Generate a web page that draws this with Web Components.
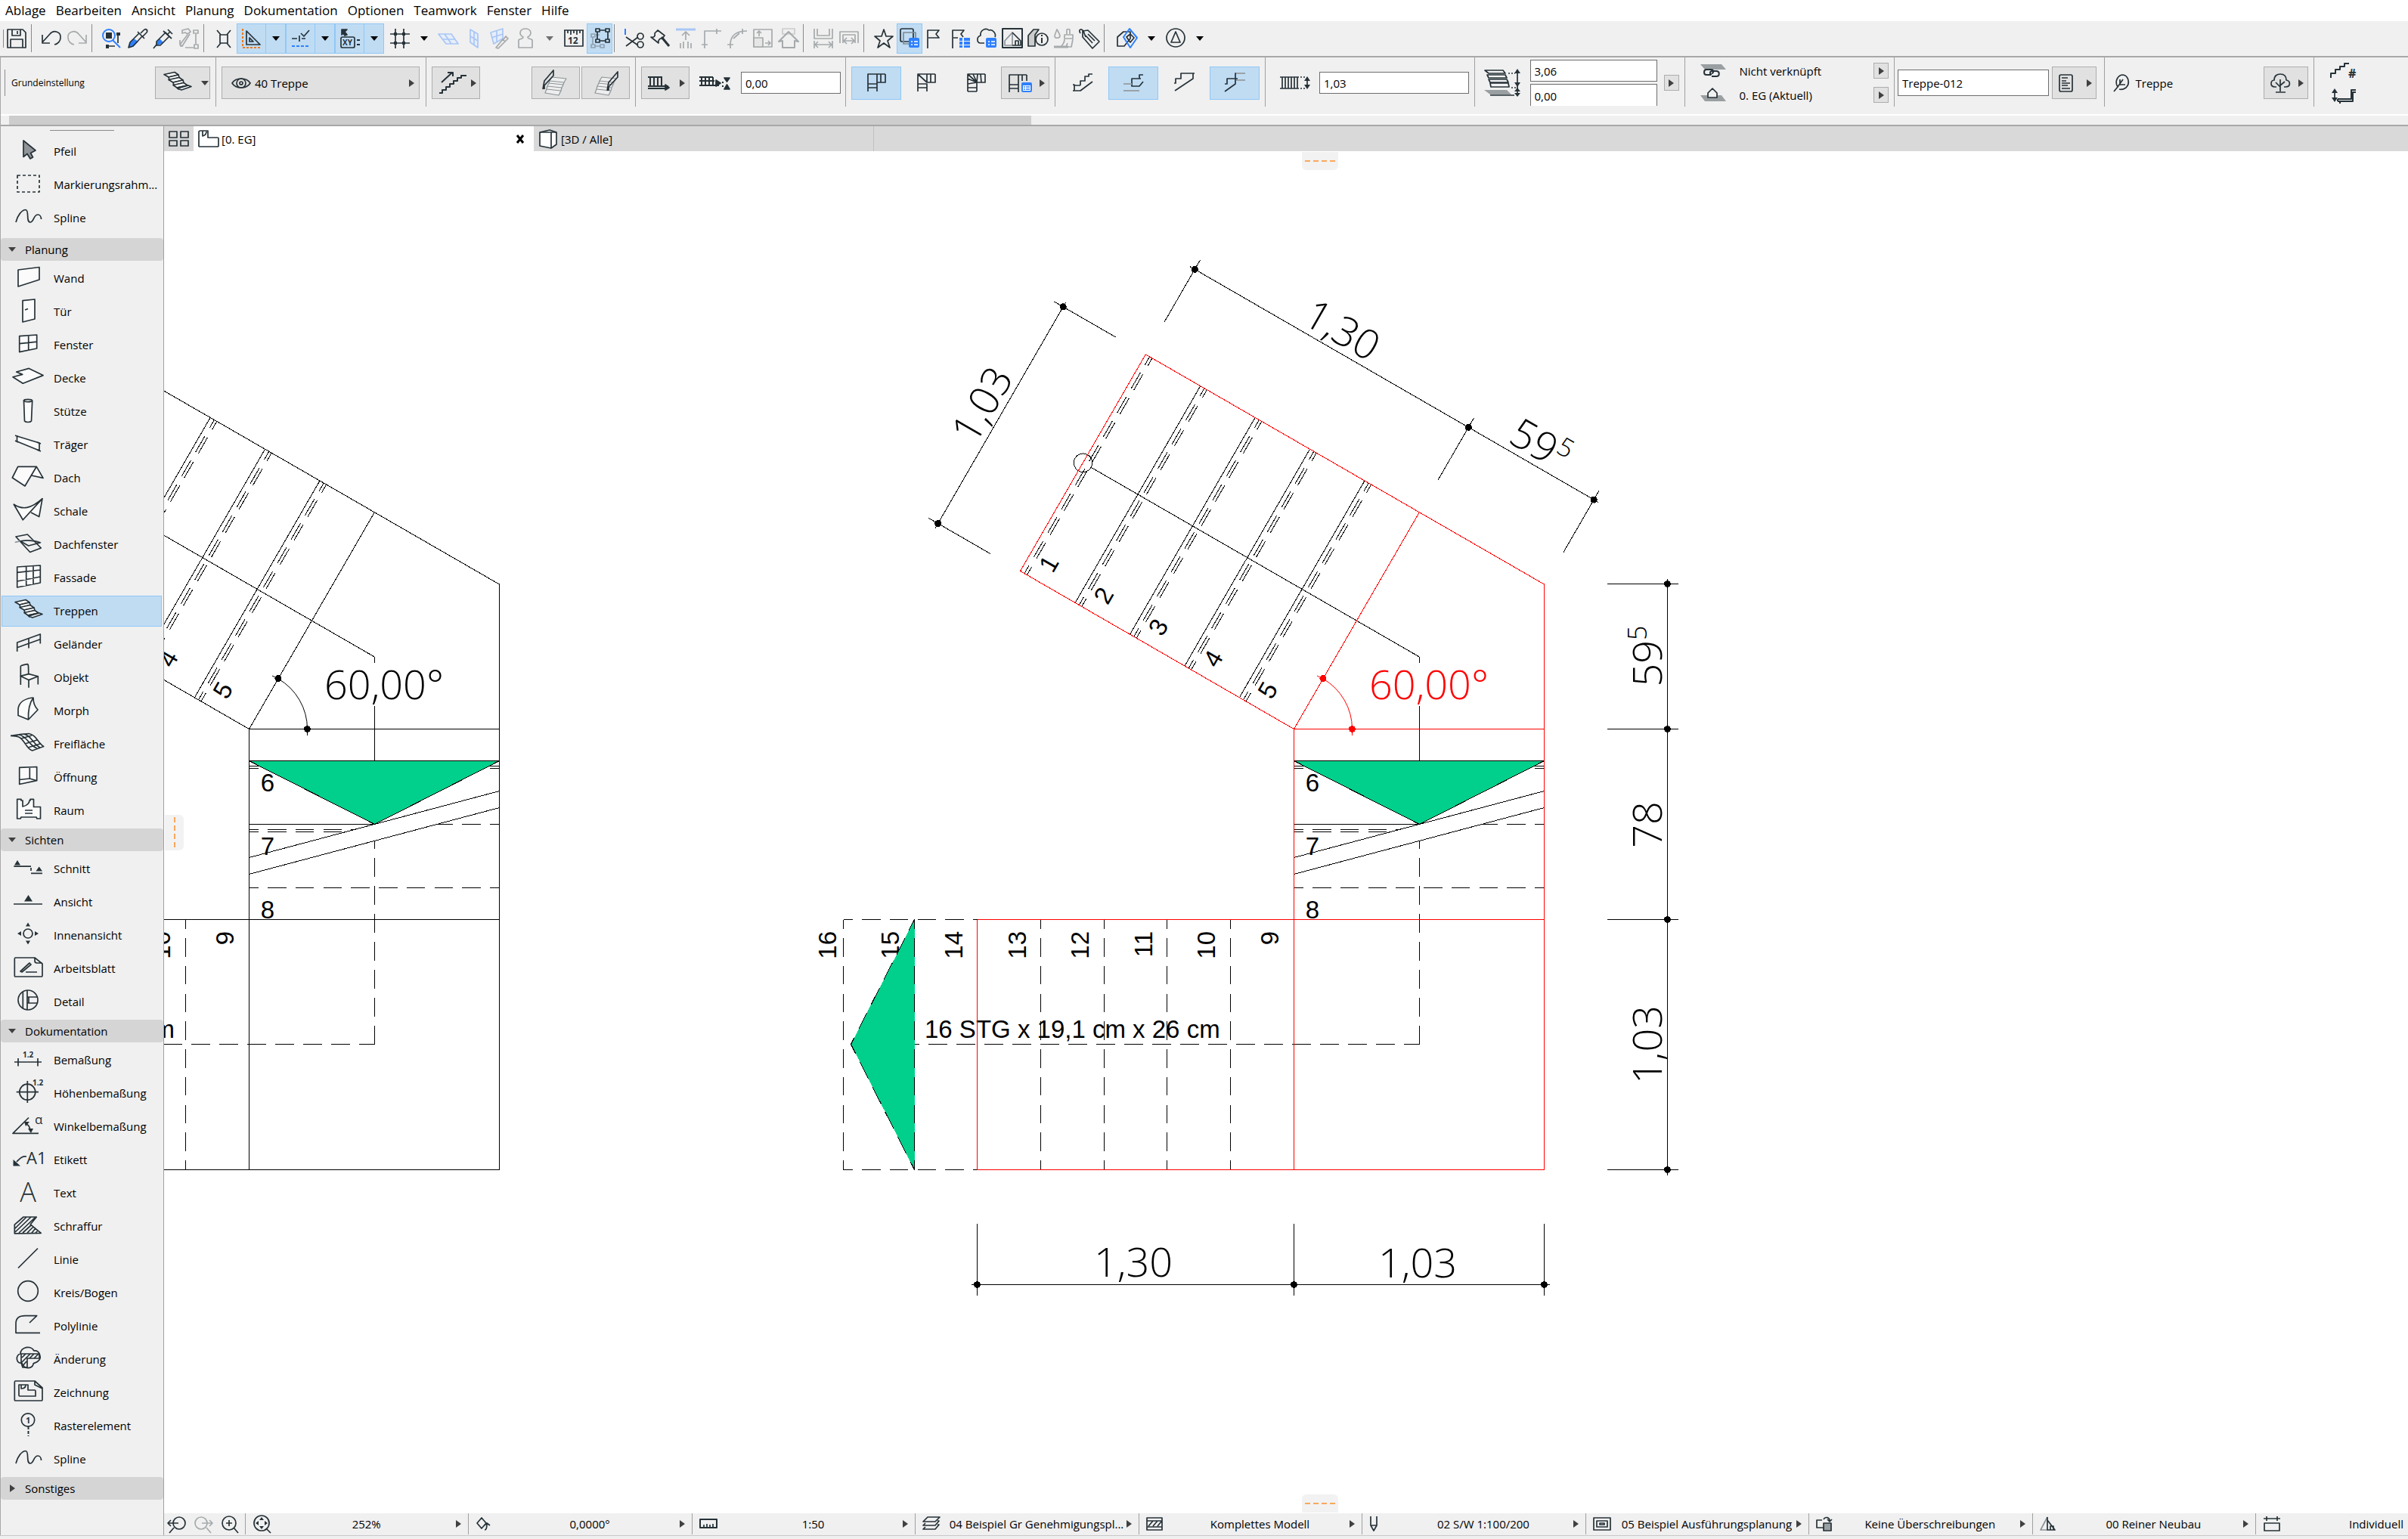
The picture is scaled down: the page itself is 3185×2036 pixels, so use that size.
<!DOCTYPE html>
<html lang="de">
<head>
<meta charset="utf-8">
<title>Grundriss – 0. EG</title>
<style>
html,body{height:100%;margin:0}
body{font-family:"Open Sans","Noto Sans",sans-serif;font-size:15px;color:#000;background:#f0f0f0;overflow:hidden}
</style>
</head>
<body>
<cad-app></cad-app>
<script>
/* ---------- icon library: [width, height, svg content] ---------- */
const I={
/* standard toolbar */
save:[28,28,'<path d="M2 2H22L26 6V26H2ZM8 2V10H19V2M6 26V15H22V26M15 4V8"/>'],
undo:[28,28,'<path d="M2 9V20H12M2 19L12 8C17 2 27 5 26 13C26 17 23 21 18 22"/>'],
redo:[28,28,'<path stroke="#a6aaac" d="M26 9V20H16M26 19L16 8C11 2 1 5 2 13C2 17 5 21 10 22"/>'],
find:[28,28,'<g stroke="#2f80ff" stroke-width="2"><circle cx="10" cy="10" r="8"/><path d="M15 16L25 26"/></g><path d="M22 8V20M8 24H18"/><path fill="#263238" stroke="none" d="M6 6H14V14H6ZM20 6H25V10H20ZM6 22H10V27H6Z"/>'],
pipette:[28,28,'<path fill="#2f80ff" stroke="none" d="M2 26L4 19L9 14L15 18L8 25Z"/><path d="M2 26L4 19L16 7L20 11L8 24ZM14 5L23 14M18 7L22 3C25 0 28 3 26 6L21 11"/>'],
syringe:[28,28,'<path fill="#2f80ff" stroke="none" d="M4 24L6 18L9 14L14 19L9 22Z"/><path d="M1 27L5 22M5 23V18L17 6L22 11L10 23ZM14 4L25 14M19 9L23 5M20 2L26 8"/>'],
hammer:[28,28,'<g stroke="#a6aaac"><path d="M5 3L13 1L16 5L12 8L9 6L5 7ZM12 9L2 22L5 24L15 8M20 3H26V7H20ZM23 8V21M2 24H6M9 26H20M21 22H26V27H21ZM2 16V22"/></g>'],
burst:[28,28,'<path d="M9 9H19V20H9ZM5 3L10 9M23 3L18 9M5 26L10 20M23 26L18 20"/>'],
setsq:[28,28,'<path d="M7 4V22H25ZM11 13V18H16Z" /><path stroke="#ee7a20" stroke-width="2" stroke-dasharray="3 2" d="M2 1V26H27"/>'],
snap:[28,28,'<path d="M2 14H9M12 10V18M15 14H20M14 7L18 11L25 3"/><path stroke="#2f80ff" stroke-width="2" stroke-dasharray="4 2" d="M2 24H26"/>'],
coord:[28,28,'<path fill="#263238" d="M3 2H10L7 5L10 9L7 10L5 7L3 9Z"/><rect x="2" y="12" width="18" height="14" rx="2"/><text x="4" y="23" font-size="10" font-weight="700">XY</text><path stroke-width="2" d="M23 16H27M23 22H27"/>'],
grid:[28,28,'<path d="M8 1V6M8 10V18M8 22V27M19 1V6M19 10V18M19 22V27M1 8H6M10 8H17M21 8H27M1 20H6M10 20H17M21 20H27"/><path fill="#263238" stroke="none" d="M6 6H10V10H6ZM17 6H21V10H17ZM6 18H10V22H6ZM17 18H21V22H17Z"/>'],
plane1:[28,28,'<g stroke="#a9c6f5"><path fill="#e6eefb" d="M1 8H18L27 21H11ZM6 15H23M9 8L18 21"/></g>'],
plane2:[28,28,'<g stroke="#a9c6f5"><path fill="#e6eefb" d="M9 2L19 8V26L9 19ZM14 5V22M9 11L19 17"/></g>'],
plane3:[28,28,'<g stroke="#a9c6f5"><path fill="#e6eefb" d="M2 6L18 1V14L6 21ZM10 4V18M3 13L18 8"/></g><path stroke="#a6aaac" fill="#eee" d="M9 26L18 15L21 18L12 27ZM19 15L22 11L25 14L21 18"/>'],
figure:[28,28,'<path stroke="#a6aaac" d="M11 12C4 8 7 1 14 1C21 1 24 8 17 12C17 15 22 14 23 16V26H5V16C6 14 11 15 11 12Z"/>'],
ruler:[28,28,'<path d="M1 3H27M2 3V24H26V3M6 3V7M10 3V9M14 3V7M18 3V9M22 3V7"/><text x="6" y="21" font-size="12" font-weight="700">12</text>'],
groupi:[28,28,'<g stroke="#8fa3b3"><path d="M3 8H8V12H3ZM3 22H8V26H3ZM15 22H20V26H15ZM5 12V22M8 24H15M9 9H14"/></g><path d="M9 1H14V5H9ZM22 1H27V5H22ZM9 15H14V19H9ZM22 15H27V19H22ZM14 3H22M11 5V15M25 5V15M14 17H22"/>'],
scissors:[28,28,'<path stroke="#2f80ff" stroke-width="2" d="M2 1V9"/><path d="M3 12L19 23M3 24L19 12"/><circle cx="22" cy="11" r="4"/><circle cx="22" cy="22" r="4"/>'],
axe:[28,28,'<path d="M2 12C6 13 8 11 7 7L11 3L20 10L17 14C14 13 11 16 12 20Z"/><path stroke-width="3" d="M16 12L26 24"/>'],
lift:[28,28,'<path stroke="#a9c6f5" stroke-width="3" d="M1 2H27"/><path stroke="#a6aaac" d="M14 16V5M9 10L14 5L19 10M7 20V27M11 18V27M17 18V27M21 20V27"/>'],
corner:[28,28,'<path stroke="#a6aaac" d="M5 27V4H27M1 22H9M21 1V8"/>'],
arci:[28,28,'<path stroke="#a6aaac" d="M5 27V20C6 10 13 4 27 4M1 22H9M21 1V8M9 14L17 7"/>'],
stretch:[28,28,'<g stroke="#a6aaac"><path d="M2 2H26V25H2Z"/><path fill="#e6e6e6" d="M2 13H14V25H2Z"/><path d="M9 11V4M6 7L9 4L12 7M17 20H24M21 17L24 20L21 23"/></g>'],
houseg:[28,28,'<g stroke="#a6aaac"><path stroke="#ccc" d="M6 1H22V8H6Z"/><path stroke-width="2" d="M1 18L14 5L27 18L22 17V26H6V17Z"/></g>'],
wallw:[28,28,'<g stroke="#a6aaac"><path d="M2 1V14H26V1M6 1V10H22V1M2 17V27M26 17V27M3 22H25M7 18L3 22L7 26M21 18L25 22L21 26"/></g>'],
wallo:[28,28,'<g stroke="#a6aaac"><path d="M2 20V5H26V20M6 20V9H22V20M7 17H21M11 13L7 17L11 21M17 13L21 17L17 21"/></g>'],
star:[28,28,'<path d="M14 2L17 11H26L19 17L22 26L14 20L6 26L9 17L2 11H11Z"/>'],
layers:[28,28,'<rect x="2" y="1" width="17" height="17" rx="2"/><path stroke="#7c8a94" d="M6 8V6H22V21H6Z"/><rect x="13" y="13" width="14" height="13" rx="2" fill="#2f80ff" stroke="none"/><path stroke="#fff" d="M16 18H18M20 18H25M16 22H18M20 22H25"/>'],
flag:[28,28,'<path d="M4 27V3H19L15 8L19 13H5"/>'],
flagl:[28,28,'<path d="M3 27V3H18L14 8L17 12M4 13H10"/><path fill="#2f80ff" stroke="none" d="M12 13H16V17H12ZM18 13H26V17H18ZM12 18H16V22H12ZM18 18H26V22H18ZM12 23H16V26H12ZM18 23H26V26H18Z"/>'],
cloud:[28,28,'<path d="M11 20H6C1 20 0 12 6 10C5 3 13-1 17 3C22 1 27 8 25 12"/><rect x="13" y="13" width="14" height="13" rx="2" fill="#2f80ff" stroke="none"/><path stroke="#fff" d="M16 18H18M20 18H25M16 22H18M20 22H25"/>'],
housebox:[28,28,'<path d="M1 1H27V26H1Z" stroke-width="2"/><path stroke="#8b9399" d="M4 23V17L14 6V23Z"/><path d="M14 6L25 17V23H14M18 23V17H22V23"/>'],
info:[28,28,'<path fill="#ccc" d="M1 24V10L8 2H15L10 9V24Z"/><circle cx="19" cy="15" r="8" fill="#f0f0f0"/><path stroke-width="2" d="M19 13V20M19 9V11"/>'],
brush:[28,28,'<g stroke="#a6aaac"><path d="M5 2C8 7 9 9 9 11C8 14 2 14 2 11C2 9 3 7 5 2ZM18 8V3C18 1 22 1 22 3V8M15 9H26V14H15ZM15 15C15 20 12 23 10 25H24L26 15M17 25L19 20"/><path stroke-width="3" d="M1 25H20"/></g>'],
clip:[28,28,'<path d="M5 12V4L12 3L27 18L18 27L5 12ZM9 10L18 20M12 8L21 17M2 7C-1 2 3 0 6 4L9 12"/>'],
morphb:[28,28,'<path d="M1 24V12L9 5L18 5V14L10 24Z"/><path stroke="#2f80ff" stroke-width="2" d="M17 1L27 13L18 26L9 12Z"/><path d="M13 12L18 8L23 13L18 19Z"/>'],
compass:[28,28,'<ellipse cx="14" cy="13" rx="12" ry="12"/><path d="M14 5L20 19H8Z"/>'],
tri:[12,8,'<path fill="#000" stroke="none" d="M1 1H11L6 7Z"/>'],
trig:[12,8,'<path fill="#707070" stroke="none" d="M1 1H11L6 7Z"/>'],
dtri:[10,8,'<path fill="#404040" stroke="none" d="M0 1H10L5 7Z"/>'],
rtri:[7,12,'<path fill="#404040" stroke="none" d="M0 1L7 6L0 11Z"/>'],
/* info bar */
stair:[44,30,'<g fill="#fbfbfb"><path d="M5 3.5L19 .5L24 4L11 7Z"/><path d="M11 7L24 4L25 7.500L12 11Z"/><path d="M11 10.500L25 7.500L30 11L17 14Z"/><path d="M17 14L30 11L31 14.500L18 18Z"/><path d="M17 17.500L31 14.500L36 18L22 21Z"/><path d="M22 21L36 18L37 19L24 23Z"/><path d="M23 22L37 18L41 19.500L28 24Z"/></g>'],
eye:[26,18,'<path d="M1 9C6 1 20 1 25 9C20 17 6 17 1 9Z"/><circle cx="13" cy="9" r="6"/><circle cx="13" cy="9" r="2"/>'],
stairup:[38,30,'<path d="M1 28H5V24H10V20H15V16H20V12H25V8H30V5H37M4 14L18 1M12 1H19V6" stroke-width="2"/>'],
railL:[40,36,'<g stroke="#8d9498" stroke-width="1.200" fill="#eee"><path d="M15 10L34 12L31 17L12 15ZM12 15L31 17L30 20L11 18ZM11 18L30 20L28 24L9 22ZM9 22L28 24L27 28L8 26ZM8 26L27 28L24 34L6 31Z"/></g><path d="M3 26L5 15L17 1V8L5 21V26"/>'],
railR:[40,36,'<g stroke="#8d9498" stroke-width="1.200" fill="#eee"><path d="M15 10L34 12L31 17L12 15ZM12 15L31 17L30 20L11 18ZM11 18L30 20L28 24L9 22ZM9 22L28 24L27 28L8 26ZM8 26L27 28L24 34L6 31Z"/></g><path d="M22 28L24 17L36 3V10L24 23V28"/>'],
posrail:[30,20,'<path stroke-width="2" d="M0 2H19M0 14H27M3 2V14M8 2V14M13 2V14M18 2V14M26 17H0"/><path fill="#263238" d="M23 12L28 16L23 19Z"/>'],
posgap:[42,22,'<path stroke-width="2" d="M0 3H18M0 14H26M3 3V14M8 3V14M13 3V14M18 3V14M0 8H20M30 10H32M30 15H32"/><path fill="#263238" d="M22 7L28 11L22 15ZM33 4H40L36.500 9ZM33 19H40L36.500 13Z"/>'],
turn1:[26,26,'<path d="M2 25V2H25M2 15H14V2M25 2V13H14V25M2 20H14M19 2V13"/>'],
turn2:[26,26,'<path d="M2 25V2H25M2 15H14V25M25 2V13H14L2 2M2 20H14M19 2V13M14 13V2"/>'],
turn3:[26,26,'<path d="M2 25V2H25M2 15L14 13V25M25 2V13H14L2 2M2 20H14M19 2L20 13M14 13L9 2M14 13L2 8M14 13L15 2M2 25H14"/>'],
turn4:[34,26,'<path d="M2 25V2H25M2 15H14V2M25 2V10M2 20H14M19 2V10M14 14V25"/><rect x="18" y="12" width="14" height="13" rx="2" fill="#2f80ff" stroke="none"/><rect x="20" y="16" width="10" height="7" fill="#fff" stroke="none"/><path stroke="#2f80ff" d="M21 18H23M24 18H29M21 21H23M24 21H29"/>'],
land1:[28,26,'<path d="M1 16H3V24H11L27 12M1 24H3M11 17V11H17V5H22V2H27M3 17H11"/>'],
land2:[28,26,'<path d="M27 3H22V8H12V18H22L27 12M22 8H24"/><path stroke="#9aa3a9" stroke-width="2" d="M1 15H12M1 24H22"/>'],
land3:[28,26,'<path d="M1 14H3V8H10V1H26V8L2 24M26 1H28"/>'],
land4:[28,26,'<path d="M1 15H4V8H15V1H28M1 25L15 15V8H18"/><path stroke="#9aa3a9" stroke-width="2" d="M16 1H28M16 10H28"/>'],
width:[42,20,'<path d="M1 2H26M1 17H26M4 2V17M8 2V17M12 2V17M16 2V17M20 2V17M24 2V17M37 5V14"/><path stroke-dasharray="2 2" d="M28 2H36M28 17H36"/><path fill="#263238" stroke="none" d="M37 1L41 7H33ZM37 18L41 12H33Z"/>'],
height:[50,38,'<g fill="#f4f4f4"><path d="M1 2H25L28 6H6ZM4 8H28L30 12H6ZM6 14H30L32 18H8ZM8 19H32L33 24H9Z"/></g><path fill="#9a9fa2" stroke="none" d="M0 28H30L36 34H8Z"/><path d="M8 35H40M44 2V36"/><path stroke-dasharray="2 2" d="M32 6H41M36 25H43"/><path fill="#263238" stroke="none" d="M44 0L48 6H40ZM44 24L48 18H40ZM44 25L48 30H40ZM44 37L48 32H40Z"/>'],
link:[34,18,'<path fill="#9a9fa2" stroke="none" d="M0 0H28L34 7H6Z"/><path fill="none" stroke-width="2" d="M14 14H8C4 14 4 7 8 7H14C18 7 18 12 15 12M15 16H21C26 16 26 9 21 9H16C12 9 12 14 15 13"/>'],
homest:[34,20,'<path fill="#9a9fa2" stroke="none" d="M0 10H28L34 18H6Z"/><path fill="#f0f0f0" d="M10 13V7L16 1L22 7V13Z"/>'],
doc:[20,24,'<rect x="1" y="1" width="17" height="22" rx="2"/><path d="M4 5H12M4 9H10M4 12H15M4 15H12M4 19H15"/>'],
leaf:[22,24,'<path d="M1 23L6 17C1 9 7 1 13 1C20 2 23 12 17 18C14 20 11 21 8 20M6 17L13 7M9 12V7M9 14H16"/>'],
tree:[26,26,'<path d="M8 18H6C-1 18 0 9 5 9C5 3 9 1 13 1C18 1 21 4 21 9C27 10 27 18 20 18H18M13 24V8M13 18L7 12M13 16L19 11M7 25H20"/>'],
stairn:[36,22,'<path stroke-width="2" d="M1 20V14H7V9H13V5H19V1H25"/><text x="24" y="20" font-size="16" font-weight="700">#</text>'],
riser:[36,20,'<path d="M6 3V15"/><path fill="#263238" stroke="none" d="M6 0L10 6H2ZM6 18L10 12H2Z"/><path stroke-width="2" d="M10 14H28V2H34M10 17H30V5H34M10 14V17M13 17V20"/>'],
/* tabs */
four:[28,22,'<path d="M1 1H11V9H1ZM16 1H26V9H16ZM1 13H11V20H1ZM16 13H26V20H16Z"/>'],
plan:[28,24,'<path d="M1 22V3C1 1 2 1 3 1H13V10H25C27 10 27 10 27 12V21C27 22 27 22 25 22H3C1 22 1 22 1 20M6 1V8C10 7 11 4 11 2"/>'],
box3:[26,26,'<path fill="#fff" d="M2 4L15 1L24 4V20L17 25L2 22Z"/><path d="M17 25V4L24 4M17 4L2 4"/>'],
close:[12,12,'<path stroke="#000" stroke-width="3" d="M2 1L10 11M10 1L2 11"/>'],
/* status bar */
zback:[26,24,'<circle cx="16" cy="10" r="8"/><path d="M15 10H1M5 6L1 10L5 14M9 16L3 23"/>'],
zfwd:[26,24,'<g stroke="#a6aaac"><circle cx="10" cy="10" r="8"/><path d="M11 10H25M21 6L25 10L21 14M17 16L23 23"/></g>'],
zin:[26,24,'<circle cx="12" cy="10" r="9"/><path d="M8 10H16M12 6V14M18 16L24 23"/>'],
zfit:[26,24,'<circle cx="12" cy="11" r="10"/><path d="M18 18L24 24"/><path fill="#263238" stroke="none" d="M12 3L15 7H9ZM12 19L15 15H9ZM4 11L8 8V14ZM20 11L16 8V14Z"/>'],
rot:[22,18,'<path d="M2 8L8 1L14 8L8 15ZM12 17C15 17 15 12 15 9M12 11L15 8L19 11"/>'],
scale:[24,14,'<path d="M1 1H23V12H1Z" stroke-width="2"/><path d="M6 8V11M10 7V11M14 8V11M18 7V11"/>'],
lay:[24,20,'<path d="M7 1H23L17 7H1ZM20 6H22L17 12H1L4 9M20 11H22L17 17H1L4 14"/>'],
model:[22,18,'<path d="M1 1H21V17H1ZM1 5H21M3 12L9 5M9 12L15 5M15 12L20 6M1 13H21"/>'],
pen:[12,22,'<path d="M2 1V13L6 20L10 13V1M2 13H10"/>'],
view:[24,18,'<path d="M1 1H23V17H1ZM5 5H19V13H5ZM9 8H15V10H9Z"/>'],
over:[22,20,'<path d="M10 15H1V5H8M10 4C12 0 18 1 18 6M15 4L18 7L21 4"/><path fill="#9a9fa2" d="M10 9H20V19H10Z"/>'],
reno:[22,20,'<path stroke="#8b9399" d="M10 1L1 18H10"/><path d="M10 1V18H20L10 5M14 18V13H18V18"/>'],
dim:[24,20,'<path d="M1 3H23M5 0V6M19 0V6M2 9H22V19H2Z"/>'],
/* toolbox */
t_pfeil:[44,30,'<path fill="#8f9599" d="M16 1V22.500L21 18.500L25 25L28.500 23L25.500 17.500L32 14Z"/>'],
t_mark:[44,30,'<rect x="8" y="3" width="29" height="22" stroke-dasharray="4 3"/>'],
t_spline:[44,30,'<path d="M6 21C8 12 14 4.500 19 4.500C24 5 19 21 25 21C30 21 29 11 35 11C38 11 39.500 14 39.500 17"/>'],
t_wand:[44,30,'<path fill="#fbfbfb" d="M9 4L37 .5V17L9 26Z"/>'],
t_tuer:[44,30,'<path fill="#fbfbfb" d="M15 .7L31 -1V25L15 29ZM18 13L22 11.500"/>'],
t_fenster:[44,30,'<path fill="#fbfbfb" d="M10.700 3.600L33.700 2V20L10.700 24.700ZM22.700 3V22M10.700 13.700L33.700 11.200"/>'],
t_decke:[44,30,'<path fill="#fbfbfb" d="M2 13.700L14.700 10.400L6.700 7L23.300 2.400L42 11.600L15.300 22.200Z"/>'],
t_stuetze:[44,30,'<path fill="#fbfbfb" d="M16.500 1L17.500 28C19 30 25 30 26.500 28L27.700 1"/><ellipse cx="22" cy="1" rx="5.600" ry="1.600"/>'],
t_traeger:[44,30,'<path fill="#fbfbfb" d="M7.500 4L37 13V23L7.500 11Z"/><path d="M5 3L9 4.500M5 10L9 12M34 12L39 14M34 22L39 24"/>'],
t_dach:[44,30,'<path fill="#fbfbfb" d="M1.300 15L8.700 .3H33.300L18 26ZM33.300 .3L42 15.400L26.700 12"/>'],
t_schale:[44,30,'<path fill="#fbfbfb" d="M3.300 6.200C15 14 26 12 41 -1.400L15.300 26.800ZM41 -1.400L36.700 22.600L26 17"/>'],
t_dachf:[44,30,'<path d="M6 5L21.300 2L39.300 20L24.700 25.500Z"/><path stroke="#8b9399" d="M4.700 12.500C15 9 30 9 39.300 13"/><path d="M12 11C22 9 30 10 38 13L22.700 17Z"/>'],
t_fassade:[44,30,'<path fill="#fbfbfb" d="M7.700 1L38.300 -1V22L7.700 28ZM19.700 0V26M29 0V24M7.700 8.300L38.300 5M7.700 20L38.300 14"/>'],
t_gel:[44,30,'<path d="M7.700 25V13L38.300 2V14.600M23 7.500V20.500M7.700 19.700L38.300 8.700"/>'],
t_obj:[44,30,'<path fill="#fbfbfb" d="M12.300 13.400L23 10.600L35.300 13.800L23 18.600Z"/><path d="M12.300 25V.4C12 -.5 20 -2.500 21.500 -2.400C22.700 -2 22.700 0 22.700 11M23 18.600V28.800M35.300 13.800V24.500"/>'],
t_morph:[44,30,'<path fill="#fbfbfb" d="M9 21.500V13C10 4 18 -1 29 -2C29 5 32 11 35 14L22.500 27ZM29 -2C24 5 22 15 22.500 27"/>'],
t_frei:[44,30,'<path fill="#fbfbfb" d="M-1 4.300C7 3.500 16 1.500 23 1.500C33 3 35 14 42.700 18.500L27.700 24C20 22 18 10 10 6C7 4.500 3 4.300 -1 4.300M10 3C20 4 24 18 34 21M16 2C27 4 29 16 38 20M13 8L27 4M18 15L34 10M22 20L38 15"/>'],
t_oeff:[44,30,'<path fill="#fbfbfb" d="M10.700 2.300L33.700 1.500V19.700L10.700 24.500ZM24.300 2V17M10.700 18.500L24.300 17L33.700 19.700"/>'],
t_raum:[44,30,'<path fill="#fbfbfb" d="M7.700 .4H13V2H15V10C21 9 24 5 24 2H25V.4H29.500V10.500H38.500V26H34L33 24H13L12 26H7.700ZM18 15H28M18 19H28"/>'],
t_schnitt:[44,30,'<path d="M3.300 12.200H26M26 14V18M26 21.300H41"/><path fill="#263238" stroke="none" d="M4 10.500L8 4L12 10.500ZM32.500 18.500L36.700 12.500L41 18.500Z"/>'],
t_ansicht:[44,30,'<path d="M3 18H41"/><path fill="#263238" stroke="none" d="M17 14.500L22.500 6L28 14.500Z"/>'],
t_innen:[44,30,'<circle cx="22" cy="13" r="6"/><path fill="#263238" stroke="none" d="M19 3.500L22 -1.500L25 3.500ZM19 22.500L22 27.500L25 22.500ZM13 10V16L8 13ZM31 10V16L36 13Z"/>'],
t_arb:[44,30,'<path d="M5 1H31L41 9V24C41 26 41 26 39 26H6C4.300 26 4.300 26 4.300 24V3C4.300 1 4.300 1 5 1ZM31 1V5C31 7 32 8 34 8H41M12 19L24 8L26 10L14 20ZM19 20H34"/>'],
t_detail:[44,30,'<circle cx="22" cy="13" r="13"/><path d="M15.300 2V24M21 0V26M21 9H34M21 17H34M23 9V17"/>'],
t_bem:[44,30,'<path d="M4 18H40M9 13V23.500M35 13V23.500"/><text x="15" y="12" font-size="10" font-weight="700">1.2</text>'],
t_hoe:[44,30,'<circle cx="21.300" cy="13.700" r="10.500"/><path d="M6.700 13.700H36M21.300 -1V28"/><text x="28" y="5" font-size="10" font-weight="700">1.2</text>'],
t_win:[44,30,'<path d="M23 3.500L2 24.300H36M20 12C24 14 25 18 25 22"/><path fill="#263238" stroke="none" d="M17 9L24 9L19 15ZM22 18H29L26 24Z"/><text x="31" y="12" font-size="17">α</text>'],
t_etik:[44,30,'<path d="M20 11C14 10 11 14 7 18"/><path fill="#263238" stroke="none" d="M2.500 15L12 23.500H2.500Z"/><text x="20" y="21" font-size="22">A1</text>'],
t_text:[44,30,'<text x="22" y="27" text-anchor="middle" font-size="36" font-weight="300">A</text>'],
t_schr:[44,30,'<path d="M4.300 24.800V13.200L16 3H33.300L25.300 12.800L39.300 24.300ZM5 18L20 3M5 23L26 3M10 24L31 4M15 24L26 14M21 24L29 16M27 24L32 18M32 24L35 21"/>'],
t_linie:[44,30,'<path d="M9 26.500L35 .5"/>'],
t_kreis:[44,30,'<circle cx="22" cy="13" r="13.300"/>'],
t_poly:[44,30,'<path d="M38 24.300H6V12C6 5 10 1.700 18 1.700H33.700L24 11"/>'],
t_aend:[44,30,'<path d="M14 20C6 22 5 9 12 8C12 -1 26 -4 30 4C38 3 40 14 36 17C34 20 28 20 29 22C27 28 16 29 14 20Z"/><path d="M13 8H37V14H21V26H15L13 20ZM14 13L19 8M14 19L25 8M15 24L20 18M24 14L30 8M30 14L36 8"/>'],
t_zeich:[44,30,'<path d="M5 0H31L41 9V24C41 26 41 26 39 26H6C4.300 26 4.300 26 4.300 24V2C4.300 0 4.300 0 5 0ZM31 0V5L41 10"/><path d="M10 5H22V12H31C32 12 32 13 32 14V20H12C10 20 10 20 10 18ZM13 5V10C17 10 19 8 19 5"/>'],
t_rast:[44,30,'<circle cx="22" cy="7.500" r="8.700"/><text x="19" y="12" font-size="11" font-weight="700">1</text><path stroke-width="2" stroke-dasharray="4 2" d="M22.500 16V29"/>']
};

const def=(tag,css,html)=>customElements.define(tag,class extends HTMLElement{
  connectedCallback(){
    if(this.shadowRoot)return;
    const r=this.attachShadow({mode:'open'});
    const t=document.createElement('template');
    t.innerHTML='<style>*{box-sizing:border-box}'+css+'</style>'+(typeof html==='function'?html(this):html);
    r.append(t.content.cloneNode(true));
  }
});
const ic=n=>`<cad-icon name="${n}"></cad-icon>`;

def('cad-icon',':host{display:inline-flex;flex:none}svg{display:block;overflow:visible}text{fill:#263238;stroke:none;font-family:"Open Sans",sans-serif}',
 e=>{const i=I[e.getAttribute('name')];return `<svg width="${i[0]}" height="${i[1]}" viewBox="0 0 ${i[0]} ${i[1]}" fill="none" stroke="#263238" stroke-width="1.700" stroke-linejoin="round" aria-hidden="true">${i[2]}</svg>`});

def('cad-menubar',':host{display:block;background:#fff;height:28px}nav{display:flex;gap:13px;padding-left:7px;height:100%;align-items:center}button{all:unset;font-size:17px;line-height:24px;height:24px}',
 '<nav>'+'Ablage Bearbeiten Ansicht Planung Dokumentation Optionen Teamwork Fenster Hilfe'.split(' ').map(x=>`<button>${x}</button>`).join('')+'</nav>');

def('tool-button',':host{display:flex;flex:none}button{border:1px solid transparent;background:none;width:34px;height:40px;padding:0;display:flex;align-items:center;justify-content:center}:host([wide]) button{width:39px}:host([arrow]) button{width:30px}:host([arrow][on]) button{width:26px;border-left:0}:host([on]) button{background:#c0dcf3;border-color:#90c8f6}',
 e=>`<button aria-label="${e.getAttribute('name')}">${ic(e.getAttribute('name'))}</button>`);

def('cad-toolbar',':host{display:flex;align-items:center;height:48px;padding:0 0 1px 4px;background:#f0f0f0;border-bottom:2px solid #a8a8a8}i{flex:none;width:1px;height:37px;background:#8a8a8a;margin:0 9px 0 2px}i.g{margin:0;height:24px}u{width:4px;flex:none}',
 ()=>{
  const b=(s,a='')=>s.split(' ').map(n=>`<tool-button name="${n}" ${a}></tool-button>`).join('');
  const g=n=>b(n,'on wide')+b('tri','on arrow');
  return '<i class="g"></i>'+b('save')+'<i></i>'+b('undo redo')+'<i></i>'+b('find pipette syringe hammer')+'<i></i>'+b('burst')+g('setsq')+g('snap')+g('coord')+'<u></u>'+b('grid')+b('tri','arrow')+b('plane1 plane2 plane3 figure')+b('trig','arrow')+b('ruler')+b('groupi','on')+'<i></i>'+b('scissors axe lift corner arci stretch houseg')+'<i></i>'+b('wallw wallo')+'<i></i>'+b('star')+b('layers','on')+b('flag flagl cloud housebox info brush clip')+'<i></i><u></u>'+b('morphb')+b('tri','arrow')+b('compass')+b('tri','arrow');
 });

def('push-button',':host{display:flex;flex:none;width:var(--w,64px)}button{width:100%;height:43px;padding:0 5px 0 8px;border:1px solid #adadad;background:#e1e1e1;display:flex;align-items:center;justify-content:space-between;font:inherit;gap:5px}:host([center]) button{justify-content:center;padding:0}:host([small]){width:20px}:host([small]) button{height:21px;padding:0;justify-content:center}:host([split]) button{padding:0 2px 0 6px}.d{width:1px;height:37px;background:#adadad}:host([flat]) button{border-color:transparent;background:none;justify-content:center;padding:0 0 2px;height:44px}:host([on]) button{background:#c0dcf3;border-color:#90c8f6}:host([wide]) button{padding:0 6px 0 12px}::slotted(span){margin-right:auto}',
 e=>`<button><slot></slot>${e.hasAttribute('split')?'<span class="d"></span>'+ic('dtri'):''}${e.hasAttribute('arrow')?ic('rtri'):''}</button>`);

def('num-field',':host{display:block;width:var(--w,132px);flex:none}input{display:block;width:100%;height:var(--h,29px);border:1px solid #6e6e6e;background:#fff;font:inherit;padding:1px 5px 0;margin:0;border-radius:0}:host([cut]) input{border-bottom:0}',
 e=>`<input type="text" aria-label="${e.getAttribute('label')}" value="${e.getAttribute('value')}">`);

def('info-section',':host{display:flex;min-width:0;align-items:center;height:65px;padding:2px 7px 0;border-right:1px solid #a0a0a0}','<slot></slot>');

def('cad-infobar',`:host{display:block;background:#f0f0f0;border-left:1px solid #a8a8a8}
.row{display:grid;grid-template-columns:285px repeat(10,minmax(0,1fr)) 124px;height:75px}
info-section.first{justify-content:space-between;padding-left:5px}
.first label{font-size:12px;border-left:1px solid #8a8a8a;height:35px;display:flex;align-items:center;padding-left:8px;line-height:35px}
.last{border:0;padding-left:21px}
.col{display:flex;flex-direction:column;gap:3px}
.auto{margin-left:auto}
.lines{display:grid;grid-template-columns:34px 1fr 20px;column-gap:18px;row-gap:2px;align-items:center;width:100%;line-height:30px}
.track{height:14px;border-top:2px solid #fff;background:#f0f0f0;padding-left:11px}
.thumb{width:42.600%;height:12px;background:#cdcdcd}
`,
`<div class="row">
<info-section class="first"><label>Grundeinstellung</label><push-button split style="--w:73px">${ic('stair')}</push-button></info-section>
<info-section><push-button arrow wide style="--w:262px">${ic('eye')}<span>40 Treppe</span></push-button></info-section>
<info-section style="gap:2px"><push-button arrow>${ic('stairup')}</push-button><push-button center class="auto">${ic('railL')}</push-button><push-button center>${ic('railR')}</push-button></info-section>
<info-section style="gap:13px"><push-button arrow>${ic('posrail')}</push-button>${ic('posgap')}<num-field label="Versatz" value="0,00"></num-field></info-section>
<info-section><push-button flat on style="--w:66px">${ic('turn1')}</push-button><push-button flat style="--w:66px">${ic('turn2')}</push-button><push-button flat style="--w:66px">${ic('turn3')}</push-button><push-button arrow>${ic('turn4')}</push-button></info-section>
<info-section style="gap:1px;padding-left:3px"><push-button flat style="--w:66px">${ic('land1')}</push-button><push-button flat on style="--w:66px">${ic('land2')}</push-button><push-button flat style="--w:66px">${ic('land3')}</push-button><push-button flat on style="--w:66px">${ic('land4')}</push-button></info-section>
<info-section style="padding-left:18px">${ic('width')}<num-field class="auto" label="Breite" value="1,03" style="--w:198px"></num-field></info-section>
<info-section style="gap:9px;padding-left:12px">${ic('height')}<div class="col auto"><num-field label="Höhe" value="3,06" style="--w:168px"></num-field><num-field cut label="Basis" value="0,00" style="--w:168px"></num-field></div><push-button small arrow></push-button></info-section>
<info-section style="padding-left:20px"><div class="lines">${ic('link')}<span>Nicht verknüpft</span><push-button small arrow></push-button>${ic('homest')}<span>0. EG (Aktuell)</span><push-button small arrow></push-button></div></info-section>
<info-section style="gap:4px;padding-left:4px"><num-field label="ID" value="Treppe-012" style="--w:200px;--h:35px"></num-field><push-button arrow style="--w:59px">${ic('doc')}</push-button></info-section>
<info-section style="gap:8px;padding-left:11px">${ic('leaf')}<span>Treppe</span><push-button arrow class="auto" style="--w:59px">${ic('tree')}</push-button></info-section>
<info-section class="last"><div class="col" style="gap:12px">${ic('stairn')}${ic('riser')}</div></info-section>
</div><div class="track"><div class="thumb"></div></div>`);

def('tool-item',':host{display:block}button{width:212px;height:41px;margin-left:1px;padding:0 0 2px 12px;border:1px solid transparent;background:none;display:flex;align-items:center;gap:12px;font:inherit;text-align:left;white-space:nowrap}:host([on]) button{background:#c0dcf3;border-color:#90c8f6}',
 e=>`<button>${ic(e.getAttribute('icon'))}<span><slot></slot></span></button>`);
def('tool-head',':host{display:block}button{width:100%;height:30px;border:0;border-radius:4px;background:#d5d5d5;display:flex;align-items:center;gap:12px;padding:0 0 0 10px;font:inherit}span{flex:none;width:10px;display:flex;justify-content:center}',
 e=>`<button><span>${ic(e.hasAttribute('closed')?'rtri':'dtri')}</span><slot></slot></button>`);

def('tool-box',':host{display:flex;flex-direction:column;flex:0 0 217px;gap:3px;border-left:1px solid #a8a8a8;border-right:1px solid #a0a0a0;background:#f0f0f0;padding-top:5px;overflow:hidden}hr{width:85px;height:1px;border:0;background:#8a8a8a;margin:0 0 4px 65px;flex:none}.first{margin-top:3px}',
 ()=>{
  const it=l=>l.map(([n,i,o])=>`<tool-item icon="${i}" ${o||''}>${n}</tool-item>`).join('');
  return '<hr>'+it([['Pfeil','t_pfeil'],['Markierungsrahm...','t_mark'],['Spline','t_spline']])
  +'<tool-head class="first">Planung</tool-head>'+it([['Wand','t_wand'],['Tür','t_tuer'],['Fenster','t_fenster'],['Decke','t_decke'],['Stütze','t_stuetze'],['Träger','t_traeger'],['Dach','t_dach'],['Schale','t_schale'],['Dachfenster','t_dachf'],['Fassade','t_fassade'],['Treppen','stair','on'],['Geländer','t_gel'],['Objekt','t_obj'],['Morph','t_morph'],['Freifläche','t_frei'],['Öffnung','t_oeff'],['Raum','t_raum']])
  +'<tool-head>Sichten</tool-head>'+it([['Schnitt','t_schnitt'],['Ansicht','t_ansicht'],['Innenansicht','t_innen'],['Arbeitsblatt','t_arb'],['Detail','t_detail']])
  +'<tool-head>Dokumentation</tool-head>'+it([['Bemaßung','t_bem'],['Höhenbemaßung','t_hoe'],['Winkelbemaßung','t_win'],['Etikett','t_etik'],['Text','t_text'],['Schraffur','t_schr'],['Linie','t_linie'],['Kreis/Bogen','t_kreis'],['Polylinie','t_poly'],['Änderung','t_aend'],['Zeichnung','t_zeich'],['Rasterelement','t_rast'],['Spline','t_spline']])
  +'<tool-head closed>Sonstiges</tool-head>';
 });

def('tab-bar',':host{display:flex;height:33px;background:#d9d9d9;flex:none}button{border:0;background:none;font:inherit;padding:0;display:flex;align-items:center}.ov{width:39px;justify-content:center}.tab{width:450px;padding:0 12px 0 6px;gap:3px}.on{background:#fff}.on cad-icon:last-child{margin-left:auto}.sep{border-right:1px solid #c0c0c0;gap:4px}',
 `<button class="ov" aria-label="Übersicht">${ic('four')}</button><button class="tab on">${ic('plan')}<span>[0. EG]</span>${ic('close')}</button><button class="tab sep">${ic('box3')}<span>[3D / Alle]</span></button>`);

/* ---------- floor plan ---------- */
const ln=(x1,y1,x2,y2,a='')=>`<line x1="${x1}" y1="${y1}" x2="${x2}" y2="${y2}" ${a}/>`;
const DASH='stroke-dasharray="24.500 12.278" stroke-dashoffset="12.250"';
const dot=(x,y,c='#000')=>`<circle cx="${x}" cy="${y}" r="4.500" fill="${c}" stroke="none"/>`;
const txt=(x,y,s,r,cls,anchor='middle')=>`<text class="${cls}" transform="translate(${x} ${y}) rotate(${r})" text-anchor="${anchor}">${s}</text>`;
const S595='59<tspan font-size="34" dy="-20">5</tspan>';

/* full = the selected stair; the other one runs under the left edge of the canvas */
function stair(dx,full){
  const c=full?'#f00':'#000', k=`stroke="${c}"`;
  const x0=1711.5,x1=2042.5,y0=964.5,y1=1216.5,y2=1547.5;
  let u='';
  for(let i=0;i<5;i++){
    const x=83.6*i;
    if(i) u+=ln(x,0,x,331);
    u+=ln(x+6,0,x+6,331,DASH)+ln(x+10,0,x+10,331,DASH);
    if(full||i>2) u+=txt(x+39,304,i+1,-90,'no');
  }
  u+=ln(12,165.5,513.5,165.5)+`<circle cx="0" cy="165.500" r="12.200"/>`;
  let s=`<g transform="translate(1515.300 468.900) rotate(30)">${u}</g>`;
  /* middle flight */
  s+=ln(x0,1013.5,x1,1013.5,DASH)+ln(x0,1016.5,x1,1016.5,DASH);
  s+=ln(x0,1090.5,1876,1090.5)+ln(1959,1090.5,x1,1090.5,'stroke-dasharray="24.500 12.278" stroke-dashoffset="260"');
  s+=ln(x0,1097.5,1850,1097.5,DASH)+ln(x0,1100.5,1838,1100.5,DASH)+ln(x0,1174.5,x1,1174.5,DASH);
  s+=ln(x0,1134.5,x1,1046.5)+ln(x0,1156.5,x1,1068.5);
  s+=`<polygon points="${x0},1006.500 ${x1},1006.500 1877.500,1090.500" fill="#00d08b"/>`;
  s+=txt(1736,1047,6,0,'no')+txt(1736,1131,7,0,'no')+txt(1736,1215,8,0,'no');
  /* walking line */
  s+=ln(1877.5,869,1877.5,877)+ln(1877.5,934,1877.5,1006)+ln(1877.5,1381.5,1877.5,1113,'stroke-dasharray="24.500 12.500"')+ln(1877.5,1381.5,1209.5,1381.5,'stroke-dasharray="24.500 12.500" stroke-dashoffset="4"');
  /* lower flight */
  for(let i=0;i<(full?8:2);i++) s+=txt(1691-83.6*i,1232,9+i,-90,'no','end');
  for(const x of [1376.5,1460.5,1543.5,1627.5,1115.5]) s+=ln(x,y1,x,y2,DASH);
  s+=ln(1115.5,y1,1292.5,y1,DASH)+ln(1115.5,y2,1292.5,y2,DASH);
  s+=`<polygon points="1209.500,${y1} 1209.500,${y2} 1125.500,1381.500" fill="#00d08b" ${DASH}/>`;
  s+=full?txt(1223,1373,'16 STG x 19,1 cm x 26 cm',0,'no','start'):txt(1613,1373,'m',0,'no','end');
  /* outline */
  s+=`<g ${k}>`+`<path d="M${x0} ${y2}V${y0}L1349.500 755.500"/><path d="M1515.300 468.900L${x1} 773V${y2}"/>`
   +ln(x0,y0,x1,y0)+ln(1292.5,y1,x1,y1)+ln(1292.5,y2,x1,y2)+ln(1292.5,y1,1292.5,y2)+ln(1515.3,468.9,1349.5,755.5)+ln(x0,y0,1877.2,678)
   +`<path shape-rendering="auto" d="M1742 894L1750 898A77 77 0 0 1 1788.500 964.500V973"/></g>`;
  s+=dot(1750,897.5,c)+dot(1788.5,964.5,c)+`<text class="dim" x="1890" y="925" text-anchor="middle" style="fill:${c}">60,00°</text>`;
  return `<g transform="translate(${dx} 0)">${s}</g>`;
}
function dims(){
  let s='';
  /* bottom chain */
  s+=ln(1285,1699.5,2050,1699.5);
  for(const x of [1292.5,1711.5,2042.5]) s+=ln(x,1619,x,1714)+dot(x,1699.5);
  s+=txt(1499,1689,'1,30',0,'dim')+txt(1875,1690,'1,03',0,'dim');
  /* right chain */
  s+=ln(2205.5,766,2205.5,1555);
  for(const y of [772.5,964.5,1216.5,1547.5]) s+=ln(2125.5,y,2220,y)+dot(2205.5,y);
  s+=txt(2198,868,S595,-90,'dim')+txt(2198,1091,'78',-90,'dim')+txt(2198,1382,'1,03',-90,'dim');
  /* inclined chains */
  let u=ln(-7,-130,616.5,-130);
  for(const x of [0,418,609.5]) u+=ln(x,-144,x,-50)+dot(x,-130);
  u+=txt(209,-139,'1,30',0,'dim')+txt(512,-139,S595,0,'dim');
  u+=ln(-126,-7,-126,338);
  for(const y of [0,331]) u+=ln(-140.5,y,-46,y)+dot(-126,y);
  u+=txt(-135,165.5,'1,03',-90,'dim');
  return s+`<g transform="translate(1515.300 468.900) rotate(30)">${u}</g>`;
}
def('plan-canvas',`:host{display:block;position:relative;flex:1;min-height:0;background:#fff;overflow:hidden}
svg{position:absolute;left:0;top:0;width:100%;height:100%}
text{fill:#000;stroke:none}
.no{font:33px "Liberation Sans",Arial,sans-serif}
.dim{font:300 54px "Open Sans","Noto Sans",sans-serif}
b{position:absolute;background:#f2f2f2;display:flex;align-items:center;justify-content:center}
b.h{width:48px;height:24px;left:50.700%}
.t{top:1px;border-radius:0 0 6px 6px}.u{bottom:1px;border-radius:6px 6px 0 0}
.l{left:1px;top:48.700%;width:25px;height:47px;border-radius:0 6px 6px 0}
b::before{content:"";width:40px;height:2px;background:repeating-linear-gradient(90deg,#f9a85c 0 7px,transparent 7px 11px)}
.l::before{width:2px;height:40px;background:repeating-linear-gradient(#f9a85c 0 7px,transparent 7px 11px)}`,
()=>`<svg role="img" aria-label="Grundriss Treppe"><g transform="translate(-217 -200)" fill="none" stroke="#000" stroke-width="1" shape-rendering="crispEdges">${stair(-1382,false)}${stair(0,true)}${dims()}</g></svg><b class="h t"></b><b class="h u"></b><b class="l"></b>`);

def('status-cell',':host{display:block;min-width:0}button{all:unset;box-sizing:border-box;display:flex;width:100%;min-width:294px;height:28px;align-items:center;border-left:1px solid #a0a0a0;padding-right:9px}.i{width:41px;flex:none;display:flex;padding-left:9px}.t{flex:1;text-align:center;white-space:nowrap}',
 e=>`<button><span class="i">${ic(e.getAttribute('icon'))}</span><span class="t"><slot></slot></span>${ic('rtri')}</button>`);
def('status-bar',':host{display:grid;grid-template-columns:107px repeat(9,minmax(0,1fr)) 202px;height:29px;flex:none;background:#f0f0f0;overflow:hidden}.z{display:flex;align-items:center;gap:9px;padding-left:4px}.z button{all:unset;display:flex}',
 '<div class="z">'+['zback','zfwd','zin'].map(n=>`<button aria-label="${n}">${ic(n)}</button>`).join('')+'</div>'
 +[['zfit','252%'],['rot','0,0000°'],['scale','1:50'],['lay','04 Beispiel Gr Genehmigungspl...'],['model','Komplettes Modell'],['pen','02 S/W 1:100/200'],['view','05 Beispiel Ausführungsplanung'],['over','Keine Überschreibungen'],['reno','00 Reiner Neubau'],['dim','Individuell']].map(([i,t])=>`<status-cell icon="${i}">${t}</status-cell>`).join(''));

def('cad-app',':host{display:flex;flex-direction:column;height:100vh;background:#f0f0f0}.main{display:flex;flex:1;min-height:0;border-top:2px solid #a8a8a8;border-bottom:1px solid #c8c8c8;margin-bottom:4px}.work{display:flex;flex-direction:column;flex:1;min-width:0}',
 '<cad-menubar></cad-menubar><cad-toolbar></cad-toolbar><cad-infobar></cad-infobar><div class="main"><tool-box></tool-box><div class="work"><tab-bar></tab-bar><plan-canvas></plan-canvas><status-bar></status-bar></div></div>');
</script>
</body>
</html>
